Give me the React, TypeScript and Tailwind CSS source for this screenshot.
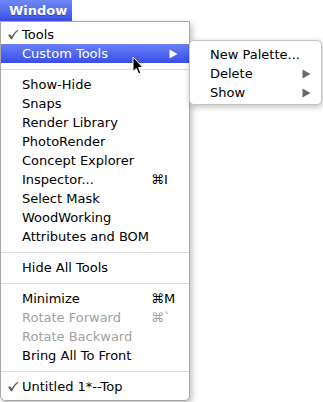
import React from "react";

type Item =
  | { kind: "sep" }
  | {
      kind: "item";
      label: string;
      check?: boolean;
      shortcut?: string;
      disabled?: boolean;
      submenu?: boolean;
      active?: boolean;
    };

const items: Item[] = [
  { kind: "item", label: "Tools", check: true },
  { kind: "item", label: "Custom Tools", submenu: true, active: true },
  { kind: "sep" },
  { kind: "item", label: "Show-Hide" },
  { kind: "item", label: "Snaps" },
  { kind: "item", label: "Render Library" },
  { kind: "item", label: "PhotoRender" },
  { kind: "item", label: "Concept Explorer" },
  { kind: "item", label: "Inspector...", shortcut: "⌘I" },
  { kind: "item", label: "Select Mask" },
  { kind: "item", label: "WoodWorking" },
  { kind: "item", label: "Attributes and BOM" },
  { kind: "sep" },
  { kind: "item", label: "Hide All Tools" },
  { kind: "sep" },
  { kind: "item", label: "Minimize", shortcut: "⌘M" },
  { kind: "item", label: "Rotate Forward", shortcut: "⌘`", disabled: true },
  { kind: "item", label: "Rotate Backward", disabled: true },
  { kind: "item", label: "Bring All To Front" },
  { kind: "sep" },
  { kind: "item", label: "Untitled 1*--Top", check: true },
];

function Tri({ color }: { color: string }) {
  return (
    <svg width="9" height="10" viewBox="0 0 9 10">
      <path d="M0.5 0.5 L8.5 5 L0.5 9.5 Z" fill={color} />
    </svg>
  );
}

function Check() {
  return (
    <svg width="12" height="11" viewBox="0 0 12 11">
      <path
        d="M1 6 L3.2 5.2 L4.6 7.6 Q7 3 11 0.6 L11.4 1.2 Q7.6 4.4 5 10.2 L3.8 10.2 Z"
        fill="#5c5c5c"
      />
    </svg>
  );
}

export default function App() {
  return (
    <div
      className="relative w-[323px] h-[402px] bg-white overflow-hidden"
      style={{ fontFamily: '"DejaVu Sans", "Liberation Sans", sans-serif' }}
    >
      {/* Menu bar title */}
      <div className="h-[21px] w-[72px] pl-[9px] flex items-center bg-gradient-to-b from-[#7187f8] to-[#3a4ee9] text-white font-bold text-[13px] [text-shadow:0_1px_0_rgba(0,0,0,0.25)]">
        Window
      </div>

      {/* Main menu panel */}
      <div className="w-[190px] h-[380px] border border-[#a8a8a8] rounded-b-[5px] bg-white pt-[3px] pb-[4px] shadow-[2px_3px_6px_rgba(0,0,0,0.25)] text-[13px] text-black">
        {items.map((it, i) =>
          it.kind === "sep" ? (
            <div key={i} className="h-[12px] flex items-center">
              <div className="h-px w-full bg-[#dcdcdc]" />
            </div>
          ) : (
            <div
              key={i}
              className={
                "h-[19px] flex items-center relative " +
                (it.active
                  ? "bg-gradient-to-b from-[#6a7ff6] to-[#3a4de8] text-white"
                  : it.disabled
                  ? "text-[#a2a2a2]"
                  : "text-black")
              }
            >
              <div className="w-[21px] flex justify-center pl-[2px]">
                {it.check ? <Check /> : null}
              </div>
              <div className="flex-1 whitespace-nowrap">{it.label}</div>
              {it.shortcut ? (
                <div className="w-[38px] whitespace-nowrap">{it.shortcut}</div>
              ) : null}
              {it.submenu ? (
                <div className="w-[20px] pr-[11px] flex items-center">
                  <Tri color="#ffffff" />
                </div>
              ) : null}
            </div>
          )
        )}
      </div>

      {/* Submenu */}
      <div className="absolute left-[189px] top-[40px] w-[133px] h-[65px] border border-[#c4c4c4] rounded-[5px] bg-white pt-[4px] shadow-[1px_2px_6px_rgba(0,0,0,0.25)] text-[13px] text-black">
        {[
          { label: "New Palette...", sub: false },
          { label: "Delete", sub: true },
          { label: "Show", sub: true },
        ].map((s) => (
          <div key={s.label} className="h-[19px] flex items-center pl-[20px]">
            <div className="flex-1 whitespace-nowrap">{s.label}</div>
            {s.sub ? (
              <div className="w-[19px] flex items-center">
                <Tri color="#6a6a6a" />
              </div>
            ) : null}
          </div>
        ))}
      </div>

      {/* Mouse cursor */}
      <svg
        className="absolute left-[132px] top-[56px]"
        width="13"
        height="19"
        viewBox="0 0 13 19"
      >
        <path
          d="M1 1 L1 15.5 L4.3 12.4 L6.6 17.8 L8.8 16.9 L6.6 11.6 L11 11.6 Z"
          fill="#000"
          stroke="#fff"
          strokeWidth="1"
          strokeLinejoin="round"
        />
      </svg>
    </div>
  );
}
